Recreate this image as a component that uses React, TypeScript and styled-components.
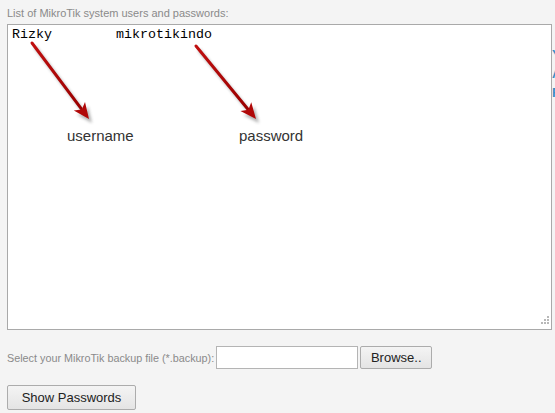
import { ReactElement } from 'react';
import styled, { createGlobalStyle } from 'styled-components';

const GlobalStyle = createGlobalStyle`
    html, body {
        margin: 0;
        padding: 0;
        background: #f4f4f4;
        overflow: hidden;
    }
    body {
        font-family: 'Liberation Sans', Arial, sans-serif;
    }
`;

const App = (): ReactElement => (
    <Page>
        <GlobalStyle />
        <Row>
            <Main>
                <Label>List of MikroTik system users and passwords:</Label>
                <ResultBox>
                    <Credentials>{'Rizky        mikrotikindo'}</Credentials>
                    <Annotations width="545" height="306" viewBox="0 0 545 306">
                        <defs>
                            <linearGradient id="shaft" x1="0" y1="0" x2="1" y2="1">
                                <stop offset="0" stopColor="#c01010" />
                                <stop offset="1" stopColor="#9a0000" />
                            </linearGradient>
                            <filter id="blur" x="-20%" y="-20%" width="140%" height="140%">
                                <feGaussianBlur stdDeviation="1.6" />
                            </filter>
                        </defs>
                        <Arrow x1={25} y1={19} x2={82} y2={95} />
                        <Arrow x1={189} y1={22} x2={249} y2={95} />
                        <Grip x={534} y={292} />
                    </Annotations>
                    <Tag left={59} top={102}>username</Tag>
                    <Tag left={231} top={102}>password</Tag>
                </ResultBox>
                <UploadRow>
                    <Hint>Select your MikroTik backup file (*.backup):</Hint>
                    <FileField />
                    <Button>Browse..</Button>
                </UploadRow>
                <Button wide>Show Passwords</Button>
            </Main>
            <Side>
                <SideLink>Youtube</SideLink>
                <SideLink>Artikel</SideLink>
                <SideLink>Forum</SideLink>
            </Side>
        </Row>
    </Page>
);

type ArrowProps = { x1: number; y1: number; x2: number; y2: number };

const Arrow = ({ x1, y1, x2, y2 }: ArrowProps): ReactElement => {
    const dx = x2 - x1;
    const dy = y2 - y1;
    const len = Math.hypot(dx, dy);
    const ux = dx / len;
    const uy = dy / len;
    const headLen = 16;
    const headW = 7;
    const bx = x2 - ux * headLen;
    const by = y2 - uy * headLen;
    const head = `${x2},${y2} ${bx - uy * headW},${by + ux * headW} ${bx + ux * 4},${by + uy * 4} ${bx + uy * headW},${by - ux * headW}`;
    return (
        <g>
            <g filter="url(#blur)" opacity="0.45" transform="translate(3,4)">
                <line x1={x1} y1={y1} x2={bx} y2={by} stroke="#555" strokeWidth="3" />
                <polygon points={head} fill="#555" />
            </g>
            <line x1={x1} y1={y1} x2={bx + ux * 3} y2={by + uy * 3} stroke="url(#shaft)" strokeWidth="3" strokeLinecap="round" />
            <polygon points={head} fill="#b00808" />
        </g>
    );
};

const Grip = ({ x, y }: { x: number; y: number }): ReactElement => (
    <g fill="#b8b8b8">
        <rect x={x + 6} y={y} width="2" height="2" />
        <rect x={x + 3} y={y + 3} width="2" height="2" />
        <rect x={x + 6} y={y + 3} width="2" height="2" />
        <rect x={x} y={y + 6} width="2" height="2" />
        <rect x={x + 3} y={y + 6} width="2" height="2" />
        <rect x={x + 6} y={y + 6} width="2" height="2" />
    </g>
);

const Page = styled.div`
    padding: 7px 0 0 7px;
    width: 900px;
`;

const Row = styled.div`
    display: flex;
    align-items: flex-start;
`;

const Main = styled.div`
    display: flex;
    flex-direction: column;
    align-items: flex-start;
    width: 545px;
    flex-shrink: 0;
`;

const Label = styled.div`
    font-size: 11px;
    line-height: 13px;
    color: #8a8a8a;
    margin-bottom: 4px;
`;

const ResultBox = styled.div`
    position: relative;
    box-sizing: border-box;
    width: 545px;
    height: 306px;
    background: #fff;
    border: 1px solid #a9a9a9;
`;

const Credentials = styled.pre`
    margin: 0;
    padding: 2px 4px;
    font-family: 'Liberation Mono', 'Courier New', monospace;
    font-size: 13.33px;
    line-height: 15px;
    color: #000;
`;

const Annotations = styled.svg`
    position: absolute;
    left: -1px;
    top: -1px;
    pointer-events: none;
`;

const Tag = styled.span<{ left: number; top: number }>`
    position: absolute;
    left: ${(p) => p.left}px;
    top: ${(p) => p.top}px;
    font-size: 15px;
    line-height: 17px;
    color: #333;
`;

const UploadRow = styled.div`
    display: flex;
    align-items: center;
    margin: 16px 0 16px;
`;

const Hint = styled.span`
    font-size: 10.8px;
    color: #8a8a8a;
    margin-right: 2px;
`;

const FileField = styled.div`
    box-sizing: border-box;
    width: 142px;
    height: 23px;
    background: #fff;
    border: 1px solid #b4b4b4;
    margin-right: 2px;
`;

const Button = styled.button<{ wide?: boolean }>`
    box-sizing: border-box;
    height: ${(p) => (p.wide ? 25 : 23)}px;
    width: ${(p) => (p.wide ? 129 : 72)}px;
    padding: 0;
    font-family: 'Liberation Sans', Arial, sans-serif;
    font-size: 13px;
    color: #222;
    background: linear-gradient(#f4f4f4, #e4e4e4);
    border: 1px solid #acacac;
    border-radius: 2px;
`;

const Side = styled.div`
    display: flex;
    flex-direction: column;
    padding-top: 38px;
`;

const SideLink = styled.span`
    font-size: 13px;
    font-weight: bold;
    line-height: 19px;
    color: #3a8ec4;
`;

export default App;
